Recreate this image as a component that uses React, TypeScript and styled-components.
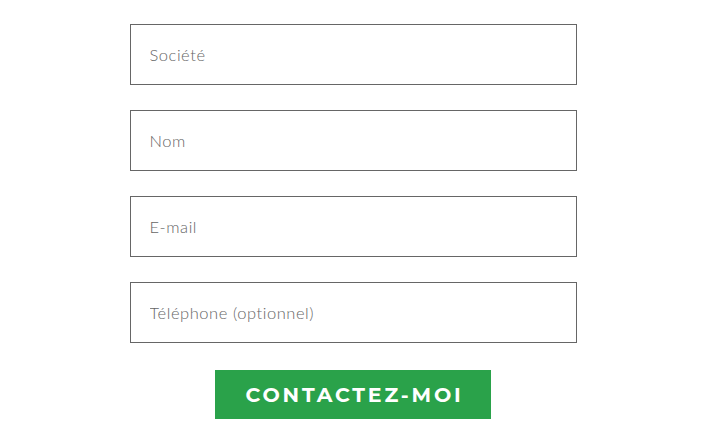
import styled, { createGlobalStyle } from 'styled-components';

const GlobalStyle = createGlobalStyle`
  body {
    margin: 0;
    background: #fff;
    font-family: 'Lato', 'Noto Sans', sans-serif;
  }
`;

const fields = ['Société', 'Nom', 'E-mail', 'Téléphone (optionnel)'];

const App = () => {
  return (
    <>
      <GlobalStyle />
      <FormWrapper>
        {fields.map((label) => (
          <Field key={label} type="text" placeholder={label} />
        ))}
        <SubmitButton type="button">CONTACTEZ-MOI</SubmitButton>
      </FormWrapper>
    </>
  );
};

const FormWrapper = styled.form`
  display: flex;
  flex-direction: column;
  align-items: center;
  gap: 25px;
  padding-top: 24px;
  margin: 0;
`;

const Field = styled.input`
  box-sizing: border-box;
  width: 447px;
  height: 61px;
  border: 1px solid #666;
  border-radius: 0;
  padding: 0 19px;
  margin: 0;
  font-family: 'Lato', 'Noto Sans', sans-serif;
  font-size: 16.5px;
  font-weight: 300;
  letter-spacing: 0.55px;
  color: #333;
  outline: none;

  &::placeholder {
    color: #666;
  }
`;

const SubmitButton = styled.button`
  box-sizing: border-box;
  width: 276px;
  height: 49px;
  margin-top: 2px;
  border: none;
  background: #2aa24a;
  color: #fff;
  font-family: 'Montserrat', 'DejaVu Sans', sans-serif;
  font-size: 20.5px;
  font-weight: 700;
  letter-spacing: 2.8px;
  padding: 0 0 0 3px;
  cursor: pointer;
`;

export default App;
